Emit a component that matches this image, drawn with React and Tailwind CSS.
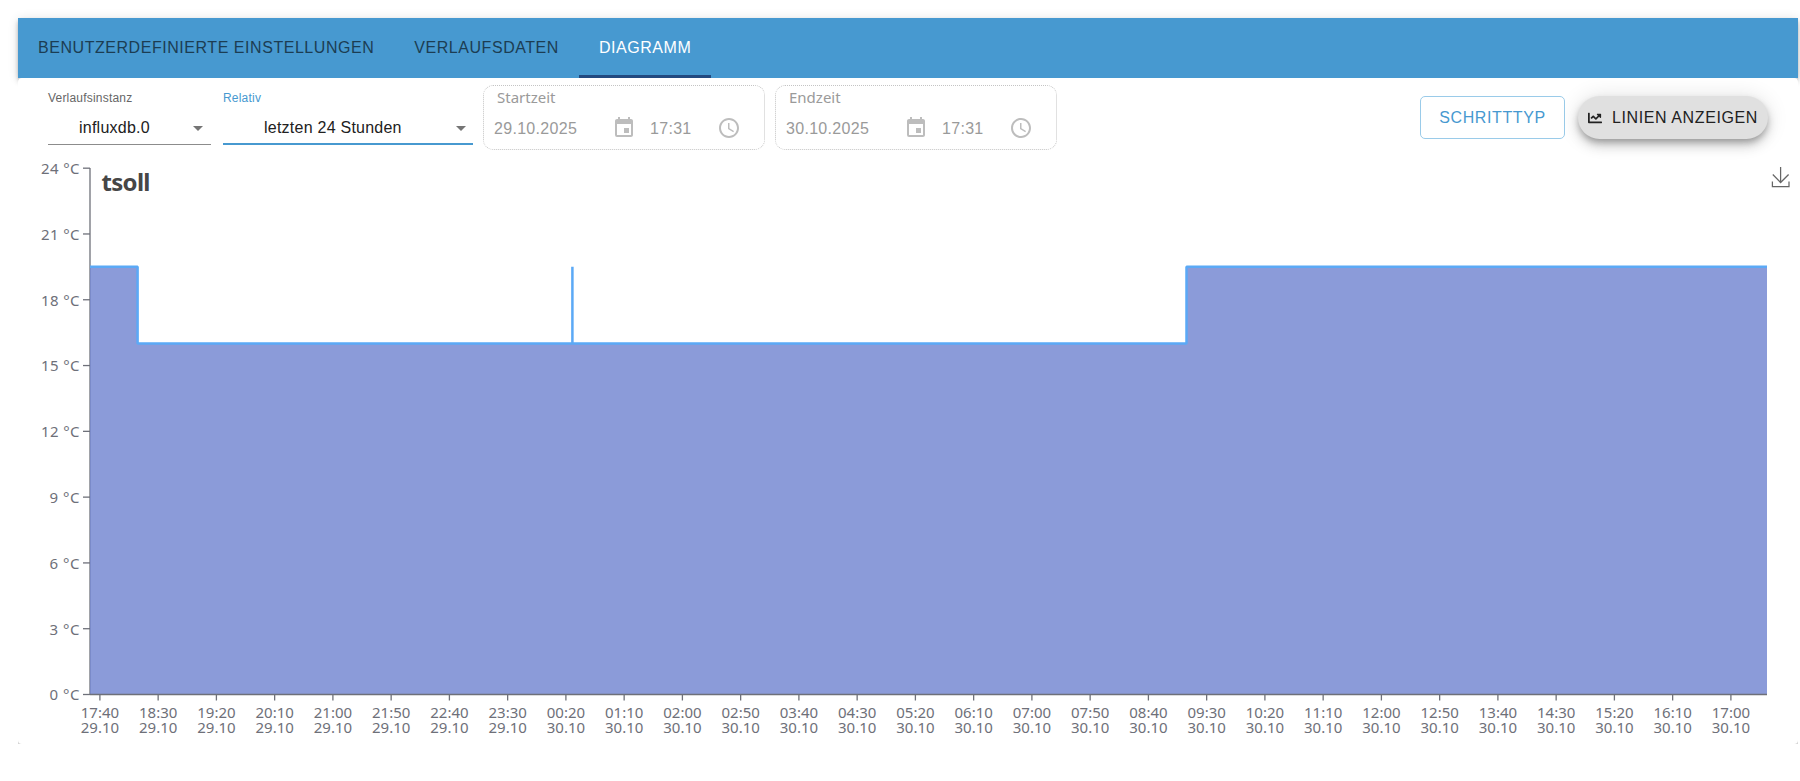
import React, { useState } from 'react'
import { FaChartLine } from 'react-icons/fa'
import { MdArrowDropDown, MdInsertInvitation, MdAccessTime } from 'react-icons/md'

const tabs = ['Benutzerdefinierte Einstellungen', 'Verlaufsdaten', 'Diagramm']

const times = [
  '17:40', '18:30', '19:20', '20:10', '21:00', '21:50', '22:40', '23:30', '00:20', '01:10',
  '02:00', '02:50', '03:40', '04:30', '05:20', '06:10', '07:00', '07:50', '08:40', '09:30',
  '10:20', '11:10', '12:00', '12:50', '13:40', '14:30', '15:20', '16:10', '17:00',
]

const temps = [24, 21, 18, 15, 12, 9, 6, 3, 0]

// chart area inside the svg
const LEFT = 72
const RIGHT = 1749
const BOTTOM = 539.5
const yPos = (t) => BOTTOM - t * 21.93

const Select = ({ label, value, active, className, valueClass }) => (
  <div className={`flex flex-col h-[67px] pt-[12px] ${className} ${active ? 'border-b-2 border-[#4799d0]' : 'border-b border-[#8c8c8c]'}`}>
    <span className={`text-[12px] leading-[16px] tracking-[0.2px] ${active ? 'text-[#4799d0]' : 'text-[#666]'}`}>{label}</span>
    <div className="flex items-center justify-between mt-[10px] h-[24px]">
      <span className={`text-[16px] tracking-[0.24px] whitespace-nowrap text-[#212121] ${valueClass}`}>{value}</span>
      <MdArrowDropDown className={`w-6 h-6 -mt-px text-[#757575] ${active ? '' : 'mr-px'}`} />
    </div>
  </div>
)

const DateBox = ({ label, date, time }) => (
  <div className="w-[282px] h-[65px] border border-dotted border-[#c4c4c4] rounded-[10px] text-[#9a9a9a] pl-[10px]">
    <div className="font-['Noto_Sans'] text-[15px] leading-[22px] pl-[3px]">{label}</div>
    <div className="flex items-center h-[24px] mt-[8px] text-[16px] tracking-[0.3px]">
      <span className="w-[118px] pt-[2px]">{date}</span>
      <MdInsertInvitation className="w-6 h-6 -mt-px text-[#bdbdbd]" />
      <span className="w-[81px] pl-[14px] pt-[2px]">{time}</span>
      <MdAccessTime className="w-6 h-6 text-[#bdbdbd]" />
    </div>
  </div>
)

const Chart = () => {
  const high = yPos(19.5)
  const low = yPos(16)
  const line = `M${LEFT} ${high}H119.6V${low}H554.4V${high}V${low}H1168.5V${high}H${RIGHT}`

  return (
    <svg width="1780" height="589" viewBox="0 0 1780 589" className="block font-['Noto_Sans']">
      {/* y axis */}
      <g stroke="#6e7079" strokeWidth="1.3">
        <path d={`M${LEFT} 13V${BOTTOM}`} />
        {temps.map((t) => (
          <path key={t} d={`M65 ${yPos(t)}H${LEFT}`} />
        ))}
      </g>
      <g fill="#6e7079" fontSize="15" textAnchor="end">
        {temps.map((t) => (
          <text key={t} x="61.5" y={yPos(t) + 5.8} textLength={t > 9 ? 38.5 : 30}>{t} °C</text>
        ))}
      </g>

      {/* series */}
      <path d={`${line}V${BOTTOM}H${LEFT}Z`} fill="#7185d1" fillOpacity="0.82" />
      <path d={line} fill="none" stroke="#5ba9f6" strokeWidth="2.5" strokeLinejoin="bevel" />

      {/* x axis */}
      <path d={`M${LEFT} ${BOTTOM}H${RIGHT}`} stroke="#6e7079" strokeWidth="1.3" />
      {times.map((time, i) => {
        const x = 81.9 + i * 58.25
        return (
          <g key={time} fill="#6e7079" fontSize="15" textAnchor="middle">
            <path d={`M${x} ${BOTTOM}v6`} stroke="#6e7079" strokeWidth="1.3" />
            <text x={x} y="563">{time}</text>
            <text x={x} y="578">{i < 8 ? '29.10' : '30.10'}</text>
          </g>
        )
      })}

      <text x="83.5" y="35.5" fill="#464646" fontSize="24" fontWeight="700" textLength="49">tsoll</text>

      {/* save as image */}
      <path d="M1754.4 26.5V31.5H1771V26.5M1762.6 12V27.5M1754.8 19.5L1762.6 27.5L1770.6 19.5" fill="none" stroke="#666" strokeWidth="1.25" />
    </svg>
  )
}

const App = () => {
  const [active, setActive] = useState('Diagramm')

  return (
    <div className="h-[781px] bg-white pt-[18px] pl-[18px] overflow-hidden font-['Liberation_Sans',sans-serif]">
      <div className="w-[1780px]">
        {/* Tabs */}
        <div className="flex h-[60px] bg-[#4799d0] shadow-[0_2px_4px_-1px_rgba(0,0,0,0.2),0_4px_5px_0_rgba(0,0,0,0.14),0_1px_10px_0_rgba(0,0,0,0.12)]">
          {tabs.map((label) => (
            <button
              key={label}
              onClick={() => setActive(label)}
              className={`h-full px-5 pt-[2px] uppercase text-[16px] tracking-[0.545px] border-b-3 ${active === label
                ? 'text-white border-[#224a80]'
                : 'text-[#1c3d53] border-transparent'
                }`}
            >
              {label}
            </button>
          ))}
        </div>

        <div className="relative bg-[#d4d4d4]">
          <div className="h-[666px] bg-white rounded-[4px]">
            {/* Toolbar */}
            <div className="flex items-start h-[77px] pl-[30px]">
              <Select label="Verlaufsinstanz" value="influxdb.0" className="w-[163px]" valueClass="pl-[31px]" />
              <Select label="Relativ" value="letzten 24 Stunden" active className="w-[250px] ml-[12px]" valueClass="pl-[41px]" />
              <div className="flex gap-[10px] ml-[10px] mt-[7px]">
                <DateBox label="Startzeit" date="29.10.2025" time="17:31" />
                <DateBox label="Endzeit" date="30.10.2025" time="17:31" />
              </div>
              <div className="flex gap-[13px] ml-auto mr-[30px] mt-[18px] text-[16px] tracking-[0.6px]">
                <button className="w-[145px] h-[43px] rounded-[5px] border border-[#9acbe9] text-[#4799d0]">SCHRITTTYP</button>
                <button className="flex items-center w-[190px] h-[43px] pl-[10px] rounded-full bg-[#e0e0e0] text-[#212121] whitespace-nowrap shadow-[0_4px_6px_-1px_rgba(0,0,0,0.25),0_7px_12px_0_rgba(0,0,0,0.15),0_1px_22px_0_rgba(0,0,0,0.12)]">
                  <FaChartLine className="w-[14px] h-[14px] mr-[10px]" />
                  LINIEN ANZEIGEN
                </button>
              </div>
            </div>
            <Chart />
          </div>
        </div>
      </div>
    </div>
  )
}

export default App
